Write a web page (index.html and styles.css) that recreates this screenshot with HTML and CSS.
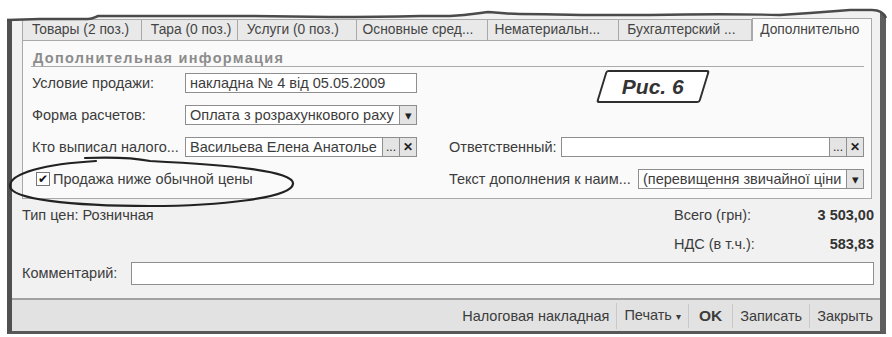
FILE: index.html
```html
<!DOCTYPE html>
<html lang="ru">
<head>
  <meta charset="UTF-8" />
  <title>Реализация товаров и услуг: Дополнительно</title>
  <link rel="stylesheet" href="styles.css">
</head>
<body>

  <div class="window">
    <div class="content">
      <div class="tabs">
        <div class="tab t1">Товары (2 поз.)</div>
        <div class="tab t2">Тара (0 поз.)</div>
        <div class="tab t3">Услуги (0 поз.)</div>
        <div class="tab t4">Основные сред...</div>
        <div class="tab t5">Нематериальн...</div>
        <div class="tab t6">Бухгалтерский ...</div>
        <div class="tab active">Дополнительно</div>
      </div>

      <div class="panel">
        <div class="group-title">Дополнительная информация</div>

        <div class="row">
          <div class="left">
            <span class="label">Условие продажи:</span>
            <div class="field"><span class="value">накладна № 4 від 05.05.2009</span></div>
          </div>
        </div>

        <div class="row">
          <div class="left">
            <span class="label">Форма расчетов:</span>
            <div class="field"><span class="value">Оплата з розрахункового раху</span></div>
            <span class="btn drop">&#9662;</span>
          </div>
        </div>

        <div class="row">
          <div class="left">
            <span class="label">Кто выписал налого...</span>
            <div class="field"><span class="value">Васильева Елена Анатолье</span></div>
            <span class="btn dots">...</span>
            <span class="btn clear">&#10005;</span>
          </div>
          <div class="right">
            <span class="label resp">Ответственный:</span>
            <div class="field"></div>
            <span class="btn dots">...</span>
            <span class="btn clear">&#10005;</span>
          </div>
        </div>

        <div class="row">
          <div class="left">
            <span class="check">&#10004;</span>
            <span class="check-text">Продажа ниже обычной цены</span>
          </div>
          <div class="right">
            <span class="label extra">Текст дополнения к наим...</span>
            <div class="field"><span class="value">(перевищення звичайної ціни</span></div>
            <span class="btn drop">&#9662;</span>
          </div>
        </div>
      </div>

      <div class="summary">
        <div class="sum-row">
          <span>Тип цен: Розничная</span>
          <div class="total">
            <span>Всего (грн):</span>
            <b>3 503,00</b>
          </div>
        </div>
        <div class="sum-row">
          <span></span>
          <div class="total">
            <span>НДС (в т.ч.):</span>
            <b>583,83</b>
          </div>
        </div>
        <div class="comment-row">
          <span class="comment-label">Комментарий:</span>
          <div class="field"></div>
        </div>
      </div>
    </div>

    <div class="toolbar">
      <span class="tool">Налоговая накладная</span>
      <span class="tool">Печать <small>&#9662;</small></span>
      <span class="tool ok">OK</span>
      <span class="tool">Записать</span>
      <span class="tool">Закрыть</span>
    </div>
  </div>

  <!-- torn paper edge of the scan -->
  <svg class="torn" width="892" height="30" viewBox="0 0 892 30">
    <path d="M0 0 H892 V30 H887 L886 18 C884 13 880 10 872 10 L850 10 C835 11 822 12 810 13 L780 15 C740 14 700 14 650 15 L600 15 C570 15 545 14 520 14 C505 14 495 12 488 12 C478 13 470 15 450 16 L420 16 C380 17 350 17 330 17 L250 16 L150 16 C120 16 104 16 98 16 C95 17 93 19 88 19 L40 19 L7 20 V30 H0 Z" fill="#fff"/>
    <path d="M7 20 L40 19 L88 19 C93 19 95 17 98 16 C104 16 120 16 150 16 L250 16 L330 17 C350 17 380 17 420 16 L450 16 C470 15 478 13 488 12 C495 12 505 14 520 14 C545 14 570 15 600 15 L650 15 C700 14 740 14 780 15 L810 13 C822 12 835 11 850 10 L872 10 C880 10 884 13 886 18" fill="none" stroke="#4a4a4a" stroke-width="2.4"/>
  </svg>

  <!-- hand drawn mark round the checkbox -->
  <svg class="mark" width="300" height="60" viewBox="0 150 300 60">
    <path d="M85 158 C110 157 135 158 150 161 C230 165 295 171 293 184 C291 198 220 206 150 206 C70 206 10 199 10 186 C10 173 45 164 96 161" fill="none" stroke="#222" stroke-width="2.2" stroke-linecap="round"/>
  </svg>

  <div class="caption"><span>Рис. 6</span></div>

</body>
</html>
```

FILE: styles.css
```css
* { box-sizing: border-box; }
body {
  margin: 0;
  position: relative;
  background: #fff;
  font-family: 'Liberation Sans', Arial, sans-serif;
  font-size: 14.5px;
  color: #3c3c3c;
}
.window {
  margin: 12px 6px 0 7px;
  height: 322px;
  background: #f1f1f1;
  border-left: 5px solid #505050;
  border-right: 6px solid #5e5e5e;
  border-bottom: 3px solid #585858;
  display: flex;
  flex-direction: column;
}
.content {
  flex: 1;
  padding: 7px 8px 0 10px;
}

/* tabs */
.tabs {
  display: flex;
  height: 21px;
  align-items: flex-end;
}
.tab {
  height: 21px;
  line-height: 19px;
  font-size: 13.8px;
  padding-left: 9px;
  white-space: nowrap;
  overflow: hidden;
  background: #e9e9e9;
  border: 1px solid #a9a9a9;
  border-left: none;
  border-bottom: none;
  color: #444;
}
.tab.t1 { width: 120px; border-left: 1px solid #a9a9a9; }
.tab.t2 { width: 96px; }
.tab.t3 { width: 119px; }
.tab.t4 { width: 132px; padding-left: 6px; }
.tab.t5 { width: 131px; padding-left: 6px; }
.tab.t6 { width: 133px; padding-left: 8px; }
.tab.active {
  width: 120px;
  height: 23px;
  line-height: 22px;
  padding-left: 7px;
  background: #fafafa;
  border-left: 1px solid #a9a9a9;
  margin-bottom: -1px;
  position: relative;
}

/* group panel */
.panel {
  width: 850px;
  height: 159px;
  background: #fafafa;
  border: 1px solid #a9a9a9;
  padding: 0 7px 0 7px;
}
.group-title {
  margin-left: 1px;
  padding: 8px 0 0 2px;
  height: 26px;
  line-height: 18px;
  font-weight: bold;
  font-size: 14.5px;
  letter-spacing: 1.3px;
  color: #8c8c8c;
  border-bottom: 1px solid #ababab;
}
.row {
  display: flex;
  align-items: center;
  height: 32px;
}
.left {
  display: flex;
  align-items: center;
  flex: none;
  width: 387px;
  padding-left: 2px;
}
.right {
  display: flex;
  align-items: center;
  flex: 1;
  min-width: 0;
  margin-left: 32px;
}
.label {
  width: 153px;
  flex: none;
  white-space: nowrap;
}
.label.resp { width: 112px; }
.label.extra { width: 189px; }
.field {
  flex: 1;
  min-width: 0;
  height: 20px;
  background: #fff;
  border: 1px solid #8e8e8e;
  padding-left: 4px;
  line-height: 18px;
  overflow: hidden;
  white-space: nowrap;
}
.btn {
  flex: none;
  width: 17px;
  height: 20px;
  background: #e4e4e4;
  border: 1px solid #8e8e8e;
  border-left: none;
  display: flex;
  align-items: center;
  justify-content: center;
  font-size: 11px;
  color: #222;
}
.btn.dots { line-height: 10px; font-size: 12px; }
.btn.clear { font-weight: bold; font-size: 12px; }
.btn.drop { font-size: 13px; }
.check {
  width: 14px;
  height: 14px;
  margin-left: 4px;
  border: 1px solid #777;
  background: #fff;
  font-size: 12px;
  line-height: 12px;
  text-align: center;
  color: #111;
}
.check-text {
  margin-left: 3px;
  white-space: nowrap;
}

/* totals and comment */
.summary {
  padding-top: 1px;
}
.sum-row {
  display: flex;
  align-items: center;
  justify-content: space-between;
  height: 29px;
}
.total {
  display: flex;
  width: 200px;
  justify-content: space-between;
  margin-right: -2px;
}
.total b { color: #333; }
.comment-row {
  display: flex;
  align-items: center;
  height: 30px;
}
.comment-label { width: 109px; }
.comment-row .field {
  height: 23px;
  margin-right: -2px;
}

/* bottom command bar */
.toolbar {
  height: 33px;
  background: #e2e2e2;
  border-top: 2px solid #a2a2a2;
  display: flex;
  justify-content: flex-end;
  align-items: center;
  padding-right: 0;
}
.tool {
  padding: 0 7px;
  line-height: 24px;
  border-left: 1px solid #c8c8c8;
  white-space: nowrap;
}
.tool:first-child { border-left: none; }
.tool small { font-size: 10px; }
.tool.ok {
  font-weight: bold;
  font-size: 15.5px;
  padding: 0 10px;
}

/* scan decoration */
.torn {
  position: absolute;
  left: 0;
  top: 0;
}
.mark {
  position: absolute;
  left: 0;
  top: 150px;
}
.caption {
  position: absolute;
  left: 601px;
  top: 70px;
  width: 104px;
  height: 33px;
  border: 2px solid #2e2e2e;
  border-radius: 3px;
  background: #fff;
  transform: skewX(-17deg);
  display: flex;
  align-items: center;
  justify-content: center;
}
.caption span {
  transform: skewX(17deg);
  font-size: 21px;
  font-weight: bold;
  font-style: italic;
  color: #333;
}
```
